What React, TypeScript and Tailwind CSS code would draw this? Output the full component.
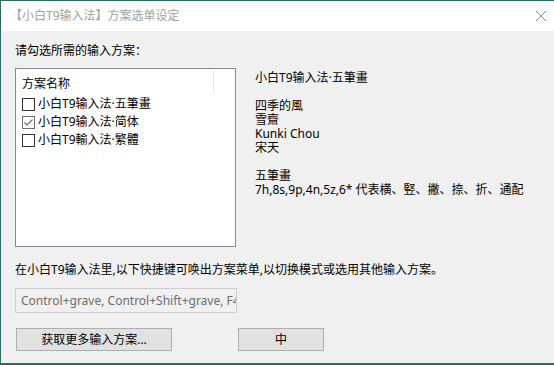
import React from "react";

const FONT = '"Segoe UI", "Noto Sans", "Noto Sans CJK SC", sans-serif';

function Check({ checked }: { checked?: boolean }) {
  return (
    <div
      className={`w-[13px] h-[13px] bg-white border flex items-center justify-center ${
        checked ? "border-[#6f6f6f]" : "border-[#333333]"
      }`}
    >
      {checked && (
        <svg width="11" height="11" viewBox="0 0 11 11">
          <path d="M1.5 5.5 L4 8 L9.5 2.5" fill="none" stroke="#6a6a6a" strokeWidth="1.2" />
        </svg>
      )}
    </div>
  );
}

export default function App() {
  const rows = [
    { t: "小白T9输入法·五筆畫", c: false },
    { t: "小白T9输入法·简体", c: true },
    { t: "小白T9輸入法·繁體", c: false },
  ];
  return (
    <div
      className="w-[554px] h-[365px] flex flex-col border-l border-t border-b-2 border-[#2a6e62] text-[12px] text-black overflow-hidden"
      style={{ fontFamily: FONT }}
    >
      <div className="h-[30px] bg-white flex items-center justify-between pl-[9px] pr-[7px] shrink-0">
        <span className="text-[#a0a0a0] leading-[16px]">【小白T9输入法】方案选单设定</span>
        <svg width="12" height="12" viewBox="0 0 12 12">
          <path d="M1 1 L11 11 M11 1 L1 11" stroke="#8a8a8a" strokeWidth="1" />
        </svg>
      </div>
      <div className="flex-1 bg-[#f0f0f0] pl-[14px] flex flex-col">
        <div className="mt-[12px] leading-[16px]">请勾选所需的输入方案：</div>
        <div className="flex mt-[9px]">
          <div className="w-[221px] h-[179px] bg-white border border-[#828790] flex flex-col">
            <div className="h-[26px] flex items-center relative pl-[6px]">
              <span className="leading-[16px] mt-[4px]">方案名称</span>
              <div className="absolute left-[197px] top-[1px] w-px h-[23px] bg-[#e5e5e5]" />
            </div>
            {rows.map((r) => (
              <div key={r.t} className="h-[18px] flex items-center pl-[6px] gap-[3px]">
                <Check checked={r.c} />
                <span className="leading-[16px]">{r.t}</span>
              </div>
            ))}
          </div>
          <div className="ml-[19px] mt-[3px] leading-[14px]">
            <div>小白T9输入法·五筆畫</div>
            <div className="h-[14px]" />
            <div>四季的風</div>
            <div>雪齋</div>
            <div>Kunki Chou</div>
            <div>宋天</div>
            <div className="h-[14px]" />
            <div>五筆畫</div>
            <div>7h,8s,9p,4n,5z,6* 代表横、竪、撇、捺、折、通配</div>
          </div>
        </div>
        <div className="mt-[15px] leading-[16px]">在小白T9输入法里,以下快捷键可唤出方案菜单,以切换模式或选用其他输入方案。</div>
        <div className="mt-[10px] w-[222px] h-[25px] border border-[#cccccc] bg-[#f0f0f0] flex items-center pl-[5px] overflow-hidden whitespace-nowrap text-[#6d6d6d]">
          Control+grave, Control+Shift+grave, F4
        </div>
        <div className="mt-[15px] flex">
          <div className="ml-[1px] w-[156px] h-[23px] bg-[#e1e1e1] border border-[#adadad] flex items-center justify-center">
            获取更多输入方案...
          </div>
          <div className="ml-[66px] w-[86px] h-[23px] bg-[#e1e1e1] border border-[#adadad] flex items-center justify-center">
            中
          </div>
        </div>
      </div>
    </div>
  );
}
